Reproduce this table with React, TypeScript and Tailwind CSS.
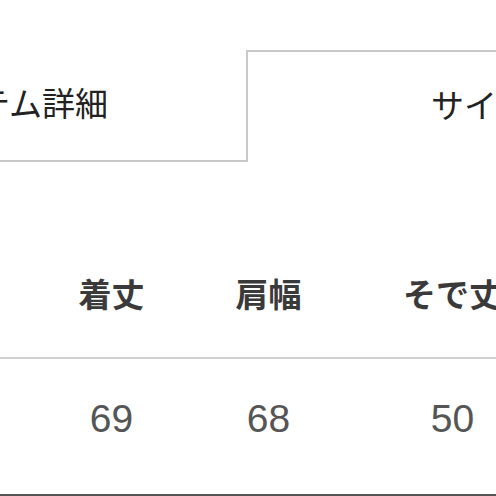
export default function App() {
  const font = { fontFamily: '"Liberation Sans", "Noto Sans CJK JP", sans-serif' };
  return (
    <div className="w-[496px] h-[496px] overflow-hidden bg-white flex flex-col" style={font}>
      <div className="mt-[50px] flex h-[112px] shrink-0">
        <div className="w-[246px] shrink-0 border-b-2 border-[#c9c9c9] flex items-center justify-end pr-[138px] text-[33px] text-[#222] whitespace-nowrap">
          アイテム詳細
        </div>
        <div className="flex-1 border-t-2 border-l-2 border-[#c9c9c9] flex items-center pl-[183px] text-[33px] text-[#222] whitespace-nowrap">
          サイズ表
        </div>
      </div>
      <div className="mt-[100px] h-[68px] flex items-center shrink-0 font-bold text-[33px] text-[#3a3a3a] whitespace-nowrap">
        <div className="w-[40px] shrink-0" />
        <div className="w-[143px] shrink-0 text-center">着丈</div>
        <div className="w-[171px] shrink-0 text-center">肩幅</div>
        <div className="w-[197px] shrink-0 text-center">そで丈</div>
      </div>
      <div className="mt-[27px] h-[2px] bg-[#d0d0d0] shrink-0" />
      <div className="mt-[26px] h-[68px] flex items-center shrink-0 text-[39px] text-[#555] whitespace-nowrap">
        <div className="w-[40px] shrink-0" />
        <div className="w-[143px] shrink-0 text-center">69</div>
        <div className="w-[171px] shrink-0 text-center">68</div>
        <div className="w-[197px] shrink-0 text-center">50</div>
      </div>
      <div className="mt-[41px] h-[2px] bg-[#555] shrink-0" />
    </div>
  );
}
